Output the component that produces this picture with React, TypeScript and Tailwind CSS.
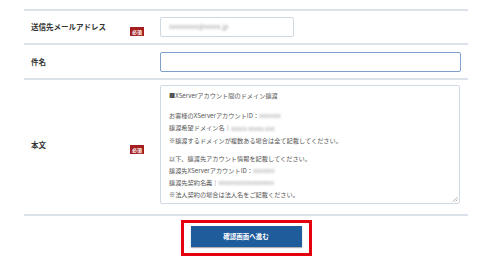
import React from "react";

const font = { fontFamily: '"Noto Sans CJK JP", "Noto Sans", sans-serif' };

function Badge() {
  return (
    <span className="inline-flex items-center justify-center w-[14px] h-[9px] bg-[#a51f1f] text-white text-[5px] font-bold leading-none">
      必須
    </span>
  );
}

function Blur({ w, children }: { w: string; children?: React.ReactNode }) {
  return (
    <span className={`inline-block align-middle blur-[0.9px] text-[#a0a0a0] ${w}`}>{children}</span>
  );
}

export default function App() {
  return (
    <div className="w-[500px] h-[277px] bg-white text-[#333]" style={font}>
      <div className="pt-[9px] ml-[24px] w-[444px]">
        {/* Row 1 */}
        <div className="flex items-center h-[34px] border-t-2 border-[#dbe2ea]">
          <div className="w-[106px] pl-[7px] text-[7.5px] font-bold">送信先メールアドレス</div>
          <div className="w-[30px]"><Badge /></div>
          <div className="w-[134px] h-[20px] border border-[#cfd9e4] rounded-[2px] flex items-center pl-[8px]">
            <span className="text-[6.5px] text-[#9a9a9a] blur-[1.1px]">xxxxxxxxx@xxxxx.jp</span>
          </div>
        </div>
        {/* Row 2 */}
        <div className="flex items-center h-[35px] border-t-2 border-[#dbe2ea]">
          <div className="w-[136px] pl-[7px] text-[7.5px] font-bold">件名</div>
          <div className="w-[301px] h-[20px] border border-[#7fa1c9] rounded-[2px]"></div>
        </div>
        {/* Row 3 */}
        <div className="flex items-center border-t-2 border-[#dbe2ea] border-b-2 pt-[5px] pb-[10px]">
          <div className="w-[106px] pl-[7px] text-[7.5px] font-bold">本文</div>
          <div className="w-[30px]"><Badge /></div>
          <div className="relative w-[300px] h-[119px] border border-[#cfd9e4] rounded-[2px] pl-[8px] pt-[4px] text-[6.2px] leading-[12px] text-[#555]">
            <div>■XServerアカウント間のドメイン譲渡</div>
            <div className="h-[8px]"></div>
            <div>お客様のXServerアカウントID：<Blur w="w-[30px]">xxxxxxx</Blur></div>
            <div>譲渡希望ドメイン名｜<Blur w="w-[60px]">xxxxx-xxxxx.xxx</Blur></div>
            <div>※譲渡するドメインが複数ある場合は全て記載してください。</div>
            <div className="h-[6px]"></div>
            <div>以下、譲渡先アカウント情報を記載してください。</div>
            <div>譲渡先XServerアカウントID：<Blur w="w-[28px]">xxxxxxx</Blur></div>
            <div>譲渡先契約名義｜<Blur w="w-[80px]">xxxxxxxxxxxxxxxxxx</Blur></div>
            <div>※法人契約の場合は法人名をご記載ください。</div>
            <svg className="absolute right-[1px] bottom-[1px]" width="6" height="6" viewBox="0 0 6 6">
              <path d="M5.5 1 L1 5.5 M5.5 3.5 L3.5 5.5" stroke="#999" strokeWidth="0.8" />
            </svg>
          </div>
        </div>
        {/* Button */}
        <div className="flex justify-center pt-[4px]">
          <div className="border-[3px] border-[#e5000f] px-[7px] pt-[3px] pb-[6px]">
            <div className="w-[111px] h-[21px] bg-[#1f5c9c] flex items-center justify-center text-white text-[6.5px] font-bold shadow-[0_1px_1px_rgba(0,0,0,0.3)]">
              確認画面へ進む
            </div>
          </div>
        </div>
      </div>
    </div>
  );
}
